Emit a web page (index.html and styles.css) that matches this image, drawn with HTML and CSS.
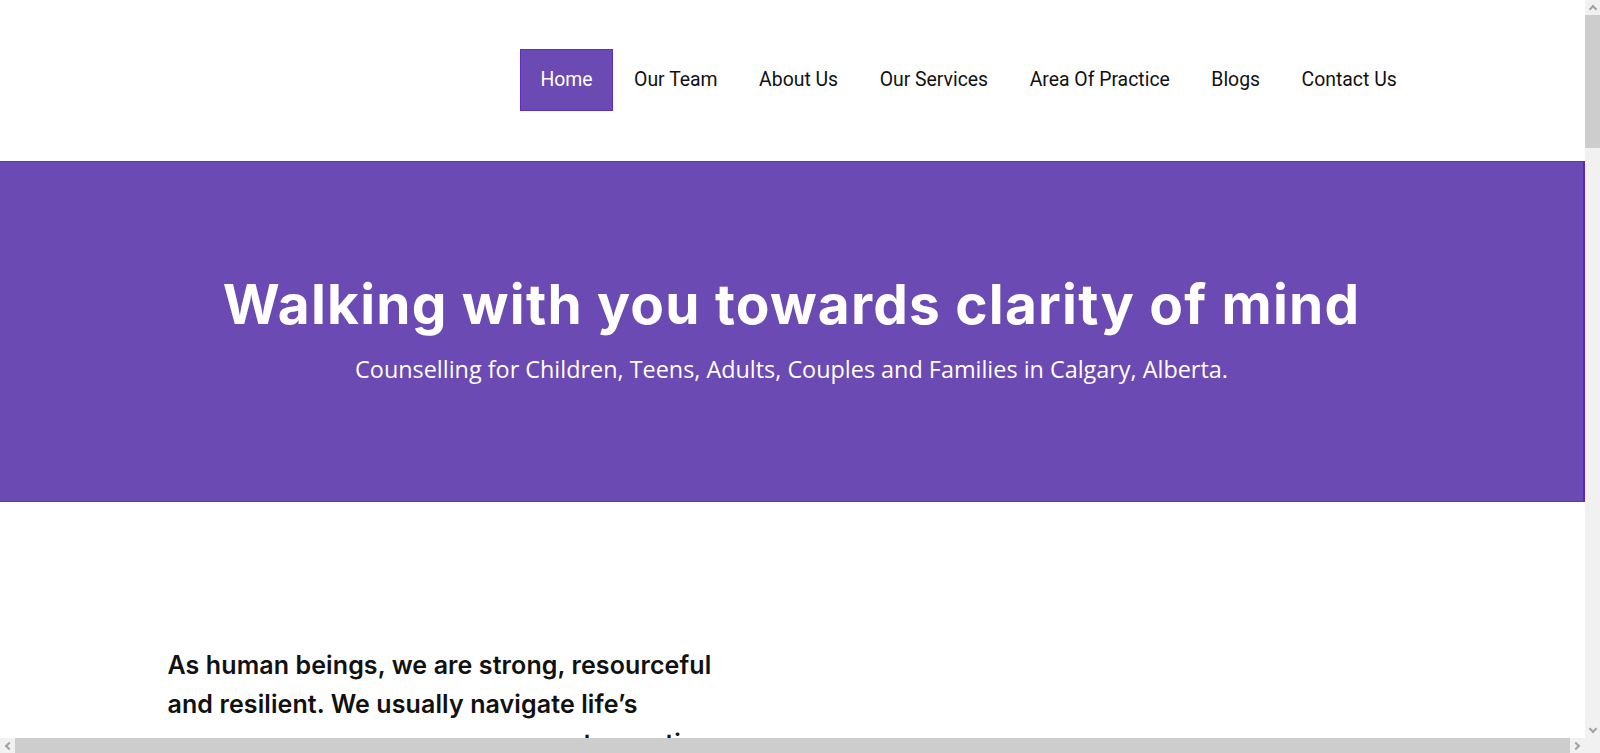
FILE: index.html
```html
<!DOCTYPE html>
<html lang="en">
<head>
<meta charset="utf-8">
<title>Walking with you towards clarity of mind</title>
<link rel="stylesheet" href="styles.css">
</head>
<body>
<div class="viewport">
  <div class="page">
    <header class="site-header">
      <div class="container header-inner">
        <div class="logo"></div>
        <nav class="main-nav">
          <a class="nav-item active" href="#">Home</a>
          <a class="nav-item" href="#">Our Team</a>
          <a class="nav-item" href="#">About Us</a>
          <a class="nav-item" href="#">Our Services</a>
          <a class="nav-item" href="#">Area Of Practice</a>
          <a class="nav-item" href="#">Blogs</a>
          <a class="nav-item" href="#">Contact Us</a>
        </nav>
      </div>
    </header>
    <section class="hero">
      <h1 class="hero-title">Walking with you towards clarity of mind</h1>
      <p class="hero-sub">Counselling for Children, Teens, Adults, Couples and Families in Calgary, Alberta.</p>
    </section>
    <section class="intro">
      <div class="container">
        <p class="intro-text">As human beings, we are strong, resourceful and resilient. We usually navigate life’s numerous seasons on our own, yet sometimes we may need a little support along the way.</p>
      </div>
    </section>
  </div>
  <div class="vbar">
    <div class="arrow arrow-up"></div>
    <div class="vthumb"></div>
    <div class="vtrack"></div>
    <div class="arrow arrow-down"></div>
  </div>
  <div class="hbar">
    <div class="arrow arrow-left"></div>
    <div class="hthumb"></div>
    <div class="arrow arrow-right"></div>
  </div>
  <div class="corner"></div>
</div>
</body>
</html>
```
FILE: styles.css
```css
* { box-sizing: border-box; }
html, body { margin: 0; padding: 0; overflow: hidden; background: #fff; }
.viewport {
  display: grid;
  grid-template-columns: 1585px 15px;
  grid-template-rows: 738px 15px;
  width: 1600px;
  height: 753px;
}
.page { overflow: hidden; background: #fff; }
.container { width: 1250px; margin: 0 auto; }

.site-header { height: 161px; }
.header-inner { height: 100%; display: flex; align-items: center; justify-content: space-between; }
.main-nav { display: flex; align-items: center; margin-top: -2px; }
.nav-item {
  font-family: Roboto, "Liberation Sans", sans-serif;
  font-size: 19.4px;
  color: #111;
  text-decoration: none;
  height: 62px;
  padding: 0 19.75px;
  display: flex;
  align-items: center;
  border: 1px solid transparent;
}
.nav-item.active { background: #6b4ab3; color: #fff; border-color: #5a2fc9; }

.hero {
  height: 341px;
  background: #6b4ab3;
  border-top: 1px solid #5e35c2;
  border-bottom: 1px solid #5e35c2;
  border-right: 2px solid #5a27cf;
  display: flex;
  flex-direction: column;
  align-items: center;
  justify-content: center;
  color: #fff;
  text-align: center;
  padding-bottom: 7px;
}
.hero-title {
  margin: 0;
  font-family: Inter, "Noto Sans", sans-serif;
  font-weight: 700;
  font-size: 55px;
  line-height: 64px;
  letter-spacing: 1.2px;
}
.hero-sub {
  margin: 17px 0 0;
  font-family: "Open Sans", "Noto Sans", sans-serif;
  font-size: 23.4px;
  line-height: 32px;
}

.intro { padding-top: 144px; }
.intro-text {
  margin: 0;
  width: 570px;
  font-family: Inter, "Noto Sans", sans-serif;
  font-weight: 600;
  font-size: 25px;
  line-height: 39px;
  letter-spacing: 0.1px;
  color: #111;
}

.vbar { background: #f1f1f1; display: flex; flex-direction: column; }
.vthumb { height: 133px; background: #cdcdcd; }
.vtrack { flex: 1; }
.hbar { background: #f1f1f1; display: flex; }
.hthumb { flex: 1; background: #cdcdcd; }
.corner { background: #f1f1f1; }
.arrow { width: 15px; height: 15px; flex: none; position: relative; }
.arrow::after {
  content: "";
  position: absolute;
  width: 4px;
  height: 4px;
  border-left: 2px solid #a3a3a3;
  border-top: 2px solid #a3a3a3;
  left: 5px;
  top: 6px;
}
.arrow-up::after { transform: rotate(45deg); }
.arrow-down::after { transform: rotate(225deg); top: 3px; }
.arrow-left::after { transform: rotate(-45deg); left: 6px; top: 5px; }
.arrow-right::after { transform: rotate(135deg); left: 3px; top: 5px; }
```
